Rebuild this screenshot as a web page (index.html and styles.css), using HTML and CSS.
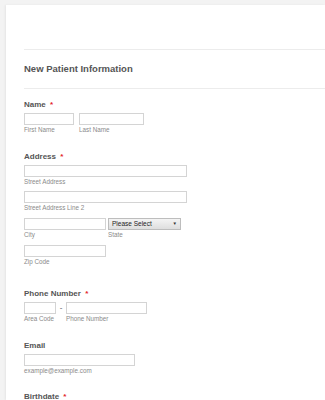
FILE: index.html
```html
<!DOCTYPE html>
<html>
<head>
<meta charset="utf-8">
<link rel="stylesheet" href="styles.css">
</head>
<body>
<div class="card">
  <div class="top-space"></div>
  <div class="header"><h1 class="title">New Patient Information</h1></div>
  <div class="form">
    <div class="field f-name">
      <div class="label">Name <span class="req">*</span></div>
      <div class="row">
        <div class="sub"><div class="input w-first"></div><div class="hint">First Name</div></div>
        <div class="sub"><div class="input w-last"></div><div class="hint">Last Name</div></div>
      </div>
    </div>
    <div class="field f-address">
      <div class="label">Address <span class="req">*</span></div>
      <div class="sub line"><div class="input w-street"></div><div class="hint">Street Address</div></div>
      <div class="sub line"><div class="input w-street"></div><div class="hint">Street Address Line 2</div></div>
      <div class="row line city-row">
        <div class="sub"><div class="input w-city"></div><div class="hint">City</div></div>
        <div class="sub state"><div class="select w-state"><span>Please Select</span><span class="arrow">▼</span></div><div class="hint">State</div></div>
      </div>
      <div class="sub"><div class="input w-city"></div><div class="hint">Zip Code</div></div>
    </div>
    <div class="field f-phone">
      <div class="label">Phone Number <span class="req">*</span></div>
      <div class="row phone-row">
        <div class="sub"><div class="input w-area"></div><div class="hint">Area Code</div></div>
        <div class="dash">-</div>
        <div class="sub"><div class="input w-phone"></div><div class="hint">Phone Number</div></div>
      </div>
    </div>
    <div class="field f-email">
      <div class="label">Email</div>
      <div class="sub"><div class="input w-email"></div><div class="hint">example@example.com</div></div>
    </div>
    <div class="field f-birth">
      <div class="label">Birthdate <span class="req">*</span></div>
    </div>
  </div>
</div>
</body>
</html>
```

FILE: styles.css
```css
html, body {
  margin: 0;
  padding: 0;
  background: #f3f3f3;
  height: 400px;
  overflow: hidden;
}
body {
  font-family: "Liberation Sans", Arial, sans-serif;
  color: #555;
}
.card {
  margin: 5px 0 0 6px;
  background: #fff;
  height: 395px;
  box-shadow: -1px 0 2px rgba(0,0,0,0.06);
}
.top-space {
  height: 44px;
}
.header {
  margin-left: 18px;
  border-top: 1px solid #ececec;
  border-bottom: 1px solid #ececec;
  height: 38px;
  display: flex;
  align-items: center;
}
.title {
  margin: 0;
  font-size: 9.5px;
  font-weight: bold;
  color: #555;
  line-height: 12px;
}
.form {
  padding-left: 18px;
}
.field {
  display: flex;
  flex-direction: column;
  align-items: flex-start;
}
.f-name { margin-top: 11px; }
.f-address { margin-top: 18px; }
.f-phone { margin-top: 23px; }
.f-email { margin-top: 18px; }
.f-birth { margin-top: 17px; }
.label {
  font-size: 8px;
  font-weight: bold;
  line-height: 10px;
  color: #555;
  margin-bottom: 3px;
}
.req {
  color: #e3242b;
  margin-left: 2px;
}
.row {
  display: flex;
  gap: 5px;
}
.line {
  margin-bottom: 5px;
}
.city-row { margin-top: 1px; margin-bottom: 6px; }
.city-row .state { margin-left: -3px; }
.phone-row { gap: 2px; }
.sub {
  display: flex;
  flex-direction: column;
}
.input {
  box-sizing: border-box;
  height: 12px;
  border: 1px solid #d4d4d4;
  background: #fff;
}
.hint {
  font-size: 6.3px;
  line-height: 8px;
  padding-top: 1px;
  color: #8a8a8a;
}
.w-first { width: 50px; }
.w-last { width: 65px; }
.w-street { width: 163px; }
.w-city { width: 82px; }
.w-state { width: 73px; }
.w-area { width: 32px; }
.w-phone { width: 81px; }
.w-email { width: 111px; }
.select {
  box-sizing: border-box;
  height: 12px;
  border: 1px solid #bdbdbd;
  background: linear-gradient(#f4f4f4, #dedede);
  font-size: 6.5px;
  line-height: 10px;
  color: #222;
  padding: 0 3px;
  display: flex;
  justify-content: space-between;
}
.arrow {
  font-size: 4.5px;
  color: #333;
}
.dash {
  font-size: 8px;
  line-height: 12px;
  color: #555;
  width: 6px;
  text-align: center;
}
```
